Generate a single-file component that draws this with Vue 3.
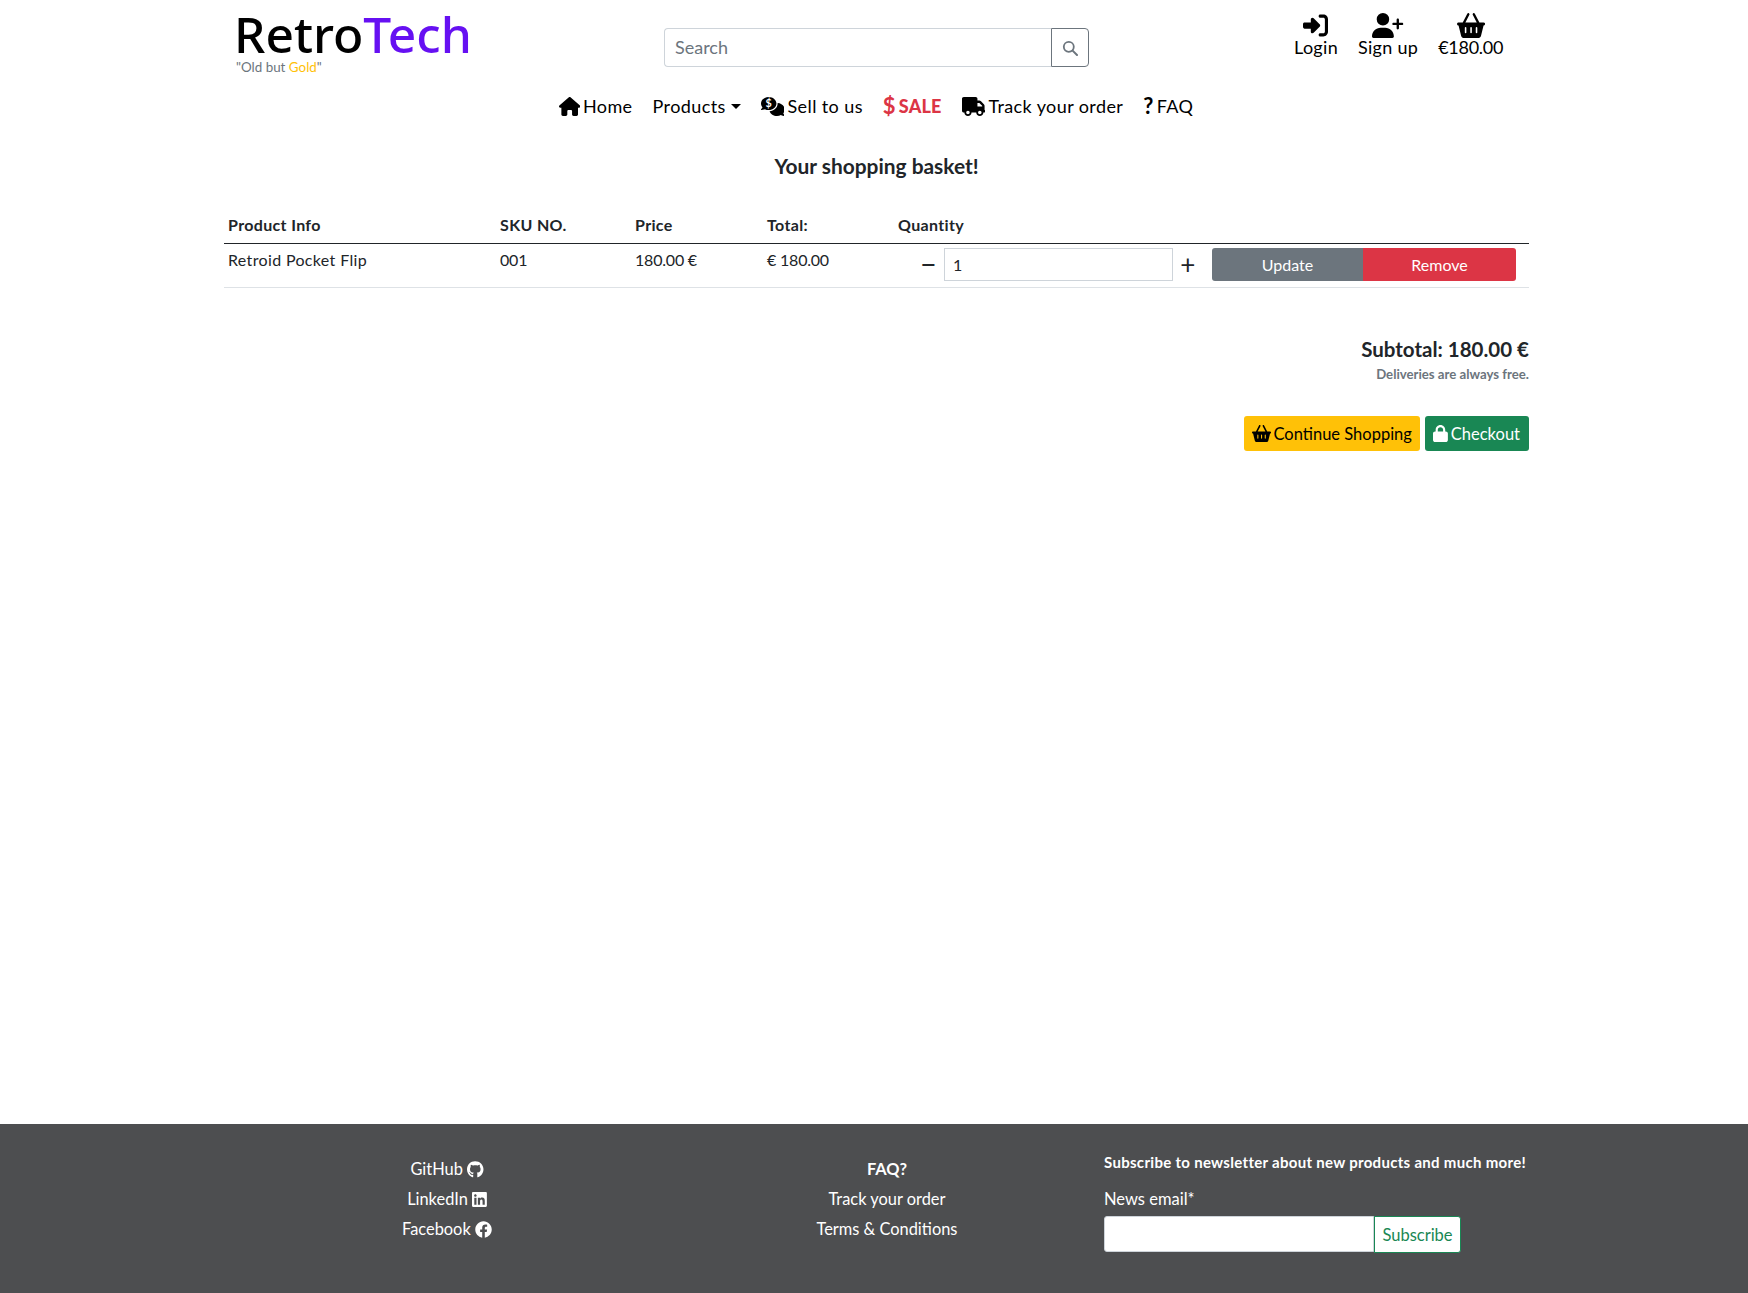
<script setup>
const icons = {
  home: 'M575.8 255.5c0 18-15 32.1-32 32.1h-32l.7 160.2c0 2.7-.2 5.4-.5 8.1V472c0 22.1-17.9 40-40 40H456c-1.1 0-2.2 0-3.3-.1c-1.4 .1-2.8 .1-4.2 .1H416 392c-22.1 0-40-17.9-40-40V448 384c0-17.7-14.3-32-32-32H256c-17.7 0-32 14.3-32 32v64 24c0 22.1-17.9 40-40 40H160 128.1c-1.5 0-3-.1-4.5-.2c-1.2 .1-2.4 .2-3.6 .2H104c-22.1 0-40-17.9-40-40V360c0-.9 0-1.9 .1-2.8V287.6H32c-18 0-32-14-32-32.1c0-9 3-17 10-24L266.4 8c7-7 15-8 22-8s15 2 21 7L564.8 231.5c8 7 12 15 11 24z',
  basket: 'M253.3 35.1c6.1-11.8 1.5-26.3-10.2-32.4s-26.3-1.5-32.4 10.2L117.6 192H32c-17.7 0-32 14.3-32 32s14.3 32 32 32L83.9 463.5C91 492 116.6 512 146 512H430c29.4 0 55-20 62.1-48.5L544 256c17.7 0 32-14.3 32-32s-14.3-32-32-32H458.4L365.3 12.9C359.2 1.2 344.7-3.4 332.9 2.7s-16.3 20.6-10.2 32.4L404.3 192H171.7L253.3 35.1zM192 304v96c0 8.8-7.2 16-16 16s-16-7.2-16-16V304c0-8.8 7.2-16 16-16s16 7.2 16 16zm96-16c8.8 0 16 7.2 16 16v96c0 8.8-7.2 16-16 16s-16-7.2-16-16V304c0-8.8 7.2-16 16-16zm128 16v96c0 8.8-7.2 16-16 16s-16-7.2-16-16V304c0-8.8 7.2-16 16-16s16 7.2 16 16z',
  signIn: 'M217.9 105.9L340.7 228.7c7.2 7.2 11.3 17.1 11.3 27.3s-4.1 20.1-11.3 27.3L217.9 406.1c-6.4 6.4-15 9.9-24 9.9c-18.7 0-33.9-15.2-33.9-33.9l0-62.1L32 320c-17.7 0-32-14.3-32-32l0-64c0-17.7 14.3-32 32-32l128 0 0-62.1c0-18.7 15.2-33.9 33.9-33.9c9 0 17.6 3.6 24 9.9zM352 416l64 0c17.7 0 32-14.3 32-32l0-256c0-17.7-14.3-32-32-32l-64 0c-17.7 0-32-14.3-32-32s14.3-32 32-32l64 0c53 0 96 43 96 96l0 256c0 53-43 96-96 96l-64 0c-17.7 0-32-14.3-32-32s14.3-32 32-32z',
  userPlus: 'M96 128a128 128 0 1 1 256 0A128 128 0 1 1 96 128zM0 482.3C0 383.8 79.8 304 178.3 304h91.4C368.2 304 448 383.8 448 482.3c0 16.4-13.3 29.7-29.7 29.7H29.7C13.3 512 0 498.7 0 482.3zM504 312V248H440c-13.3 0-24-10.7-24-24s10.7-24 24-24h64V136c0-13.3 10.7-24 24-24s24 10.7 24 24v64h64c13.3 0 24 10.7 24 24s-10.7 24-24 24H552v64c0 13.3-10.7 24-24 24s-24-10.7-24-24z',
  truck: 'M48 0C21.5 0 0 21.5 0 48V368c0 26.5 21.5 48 48 48H64c0 53 43 96 96 96s96-43 96-96H384c0 53 43 96 96 96s96-43 96-96h32c17.7 0 32-14.3 32-32s-14.3-32-32-32V288 256 237.3c0-17-6.7-33.3-18.7-45.3L512 114.7c-12-12-28.3-18.7-45.3-18.7H416V48c0-26.5-21.5-48-48-48H48zM416 160h50.7L544 237.3V256H416V160zM112 416a48 48 0 1 1 96 0 48 48 0 1 1 -96 0zm368-48a48 48 0 1 1 0 96 48 48 0 1 1 0-96z',
  comments: 'M416 176c0 97.2-93.1 176-208 176c-38.2 0-73.9-8.7-104.7-23.9c-7.5 4-16 7.9-25.2 11.4C59.8 346.4 37.8 352 16 352c-6.9 0-13.1-4.5-15.2-11.1s.2-13.8 5.8-17.9l0 0 0 0 .2-.2c.2-.2 .6-.4 1.1-.8c1-.8 2.5-2 4.3-3.7c3.6-3.3 8.5-8.1 13.3-14.3c5.5-7 10.7-15.4 14.2-24.7C14.7 250.3 0 214.6 0 176C0 78.8 93.1 0 208 0S416 78.8 416 176zM231.5 383C348.9 372.9 448 288.3 448 176c0-5.2-.2-10.4-.6-15.5C555.1 167.1 640 243.2 640 336c0 38.6-14.7 74.3-39.6 103.4c3.5 9.4 8.7 17.7 14.2 24.7c4.8 6.2 9.7 11 13.3 14.3c1.8 1.6 3.3 2.9 4.3 3.7c.5 .4 .9 .7 1.1 .8l.2 .2 0 0 0 0c5.6 4.1 7.9 11.3 5.8 17.9c-2.1 6.6-8.3 11.1-15.2 11.1c-21.8 0-43.8-5.6-62.1-12.5c-9.2-3.5-17.8-7.4-25.2-11.4C505.9 503.3 470.2 512 432 512c-95.6 0-176.2-54.6-200.5-129z',
  lock: 'M144 144v48H304V144c0-44.2-35.8-80-80-80s-80 35.8-80 80zM80 192V144C80 64.5 144.5 0 224 0s144 64.5 144 144v48h16c35.3 0 64 28.7 64 64V448c0 35.3-28.7 64-64 64H64c-35.3 0-64-28.7-64-64V256c0-35.3 28.7-64 64-64H80z',
  github: 'M165.9 397.4c0 2-2.3 3.6-5.2 3.6-3.3 0-5.6-1.6-5.6-3.6 0-2 2.3-3.6 5.2-3.6 3-.3 5.6 1.3 5.6 3.6zm-31.1-4.5c-.7 2 1.3 4.3 4.3 4.9 2.6 1 5.6 0 6.2-2s-1.3-4.3-4.3-5.2c-2.6-.7-5.5.3-6.2 2.3zm44.2-1.7c-2.9.7-4.9 2.6-4.6 4.9.3 2 2.9 3.3 5.9 2.6 2.9-.7 4.9-2.6 4.6-4.6-.3-1.9-3-3.2-5.9-2.9zM244.8 8C106.1 8 0 113.3 0 252c0 110.9 69.8 205.8 169.5 239.2 12.8 2.3 17.3-5.6 17.3-12.1 0-6.2-.3-40.4-.3-61.4 0 0-70 15-84.7-29.8 0 0-11.4-29.1-27.8-36.6 0 0-22.9-15.7 1.6-15.4 0 0 24.9 2 38.6 25.8 21.9 38.6 58.6 27.5 72.9 20.9 2.3-16 8.8-27.1 16-33.7-55.9-6.2-112.3-14.3-112.3-110.5 0-27.5 7.6-41.3 23.6-58.9-2.6-6.5-11.1-33.3 2.6-67.9 20.9-6.5 69 27 69 27 20-5.6 41.5-8.5 62.8-8.5s42.8 2.9 62.8 8.5c0 0 48.1-33.6 69-27 13.7 34.7 5.2 61.4 2.6 67.9 16 17.7 25.8 31.5 25.8 58.9 0 96.5-58.9 104.2-114.8 110.5 9.2 7.9 17 22.9 17 46.4 0 33.7-.3 75.4-.3 83.6 0 6.5 4.6 14.4 17.3 12.1C428.2 457.8 496 362.9 496 252 496 113.3 383.5 8 244.8 8z',
  linkedin: 'M416 32H31.9C14.3 32 0 46.5 0 64.3v383.4C0 465.5 14.3 480 31.9 480H416c17.6 0 32-14.5 32-32.3V64.3c0-17.8-14.4-32.3-32-32.3zM135.4 416H69V202.2h66.5V416zm-33.2-243c-21.3 0-38.5-17.3-38.5-38.5S80.9 96 102.2 96c21.2 0 38.5 17.3 38.5 38.5 0 21.3-17.2 38.5-38.5 38.5zm282.1 243h-66.4V312c0-24.8-.5-56.7-34.5-56.7-34.6 0-39.9 27-39.9 54.9V416h-66.4V202.2h63.7v29.2h.9c8.9-16.8 30.6-34.5 62.9-34.5 67.2 0 79.7 44.3 79.7 101.9V416z',
  facebook: 'M504 256C504 119 393 8 256 8S8 119 8 256c0 123.78 90.69 226.38 209.25 245V327.69h-63V256h63v-54.64c0-62.15 37-96.48 93.67-96.48 27.14 0 55.52 4.84 55.52 4.84v61h-31.28c-30.8 0-40.41 19.12-40.41 38.73V256h68.78l-11 71.69h-57.78V501C413.31 482.38 504 379.78 504 256z'
}
</script>

<template>
  <div class="page">
    <header class="wrap head">
      <div class="brand">
        <div class="logo">Retro<span class="tech">Tech</span></div>
        <div class="tag">"Old but <span class="gold">Gold</span>"</div>
      </div>
      <form class="search" @submit.prevent>
        <input class="search-input" type="text" placeholder="Search" />
        <button class="search-btn" type="button" aria-label="Search">
          <svg viewBox="0 0 16 16" width="16" height="16"><circle cx="6.8" cy="6.8" r="5" fill="none" stroke="#6c757d" stroke-width="1.8"/><path d="M10.6 10.6L15 15" stroke="#6c757d" stroke-width="2" stroke-linecap="round"/></svg>
        </button>
      </form>
      <div class="account">
        <a class="acc">
          <svg class="acc-i" viewBox="0 0 512 512"><path :d="icons.signIn"/></svg>
          <span>Login</span>
        </a>
        <a class="acc">
          <svg class="acc-i" viewBox="0 0 640 512"><path :d="icons.userPlus"/></svg>
          <span>Sign up</span>
        </a>
        <a class="acc">
          <svg class="acc-i" viewBox="0 0 576 512"><path :d="icons.basket"/></svg>
          <span class="amount">€180.00</span>
        </a>
      </div>
    </header>

    <nav class="nav">
      <a class="nav-link"><svg class="ni" viewBox="0 0 576 512"><path :d="icons.home"/></svg><span>Home</span></a>
      <a class="nav-link">Products<span class="caret"></span></a>
      <a class="nav-link">
        <svg class="ni" viewBox="0 0 640 512">
          <path :d="icons.comments"/>
          <text x="208" y="280" font-size="290" font-weight="700" fill="#fff" text-anchor="middle" font-family="Lato, sans-serif">$</text>
        </svg><span>Sell to us</span></a>
      <a class="nav-link sale"><span class="dollar">$</span><span>SALE</span></a>
      <a class="nav-link"><svg class="ni" viewBox="0 0 640 512"><path :d="icons.truck"/></svg><span>Track your order</span></a>
      <a class="nav-link"><span class="q">?</span><span>FAQ</span></a>
    </nav>

    <main class="wrap main">
      <h1 class="title">Your shopping basket!</h1>
      <table class="basket">
        <colgroup>
          <col class="c1" /><col class="c2" /><col class="c3" /><col class="c4" /><col />
        </colgroup>
        <thead>
          <tr>
            <th>Product Info</th>
            <th>SKU NO.</th>
            <th>Price</th>
            <th>Total:</th>
            <th>Quantity</th>
          </tr>
        </thead>
        <tbody>
          <tr>
            <td>Retroid Pocket Flip</td>
            <td class="num">001</td>
            <td class="num">180.00 €</td>
            <td class="num">€ 180.00</td>
            <td class="qty-cell">
              <div class="qty">
                <span class="step minus">−</span>
                <input class="qty-input" type="text" value="1" />
                <span class="step plus">+</span>
                <button class="btn update" type="button">Update</button>
                <button class="btn remove" type="button">Remove</button>
              </div>
            </td>
          </tr>
        </tbody>
      </table>

      <div class="summary">
        <div class="subtotal">Subtotal: 180.00 €</div>
        <div class="free">Deliveries are always free.</div>
        <div class="actions">
          <button class="btn act cont" type="button"><svg class="bi" viewBox="0 0 576 512"><path :d="icons.basket"/></svg><span>Continue Shopping</span></button>
          <button class="btn act check" type="button"><svg class="bi" viewBox="0 0 448 512"><path :d="icons.lock"/></svg><span>Checkout</span></button>
        </div>
      </div>
    </main>

    <footer class="foot">
      <div class="foot-in">
        <div class="fcol social">
          <a>GitHub <svg class="fi" viewBox="0 0 496 512"><path :d="icons.github"/></svg></a>
          <a>LinkedIn <svg class="fi" viewBox="0 0 448 512"><path :d="icons.linkedin"/></svg></a>
          <a>Facebook <svg class="fi" viewBox="0 0 512 512"><path :d="icons.facebook"/></svg></a>
        </div>
        <div class="fcol links">
          <a class="faq">FAQ?</a>
          <a>Track your order</a>
          <a>Terms &amp; Conditions</a>
        </div>
        <div class="news">
          <div class="news-title">Subscribe to newsletter about new products and much more!</div>
          <label class="news-label">News email*</label>
          <div class="news-row">
            <input class="news-input" type="email" />
            <button class="sub" type="button">Subscribe</button>
          </div>
        </div>
      </div>
    </footer>
  </div>
</template>

<style>
html, body { margin: 0; background: #fff; }
</style>

<style scoped>
.page {
  min-height: 1293px;
  display: flex;
  flex-direction: column;
  font-family: Lato, "Noto Sans", sans-serif;
  font-size: 16px;
  line-height: 24px;
  color: #212529;
}
.wrap { width: 1305px; margin-left: 224px; box-sizing: border-box; }

.head { display: flex; align-items: flex-start; height: 78px; }
.brand { width: 440px; padding: 9px 0 0 10px; box-sizing: border-box; }
.logo { font-family: "Noto Sans", Lato, sans-serif; font-size: 49.7px; line-height: 50px; font-weight: 500; color: #000; }
.tech { color: #6610f2; }
.tag { font-size: 13.4px; line-height: 14px; color: #6c757d; margin-top: 1px; margin-left: 2px; }
.gold { color: #ffc107; }

.search { display: flex; width: 425px; margin-top: 28px; height: 39px; }
.search-input {
  flex: 1; min-width: 0; box-sizing: border-box; height: 39px; padding: 4px 10px 6px;
  border: 1px solid #ced4da; border-right: 0; border-radius: 4px 0 0 4px;
  font: 18px Lato, sans-serif; outline: none;
}
.search-input::placeholder { color: #6c757d; opacity: 1; }
.search-btn {
  width: 38px; height: 39px; box-sizing: border-box; padding: 0;
  display: flex; align-items: center; justify-content: center;
  background: #fff; border: 1px solid #6c757d; border-radius: 0 4px 4px 0;
}

.account { display: flex; gap: 20px; margin-left: 205px; margin-top: 13px; color: #000; font-size: 18px; letter-spacing: 0.3px; }
.acc { display: flex; flex-direction: column; align-items: center; line-height: 22px; }
.acc span { margin-top: -2px; }
.acc .amount { letter-spacing: -0.3px; }
.acc-i { height: 25px; width: auto; display: block; fill: #000; }

.nav {
  display: flex; justify-content: center; gap: 20px; height: 36px; align-items: center;
  font-size: 18px; color: #000; letter-spacing: 0.4px; padding-left: 4px;
  margin-top: 10px;
}
.nav-link { display: flex; align-items: center; gap: 3px; white-space: nowrap; }
.ni { height: 19px; width: auto; fill: #000; display: block; }
.caret {
  display: inline-block; margin-left: 2px; width: 0; height: 0;
  border-top: 5px solid #000; border-left: 5px solid transparent; border-right: 5px solid transparent;
}
.sale { color: #dc3545; font-weight: 900; letter-spacing: 0.2px; }
.dollar { font-size: 22px; font-weight: 700; }
.q { font-size: 22px; font-weight: 700; }

.main { flex: 1; }
.title { margin: 27px 0 0; text-align: center; font-size: 20.9px; line-height: 30px; font-weight: 700; }

.basket { width: 100%; table-layout: fixed; border-collapse: collapse; margin-top: 27px; letter-spacing: 0.35px; }
.c1 { width: 272px; }
.c2 { width: 135px; }
.c3 { width: 132px; }
.c4 { width: 131px; }
th { text-align: left; padding: 5px 4px 6px; font-size: 16px; font-weight: 700; border-bottom: 1px solid #212529; }
td { padding: 4px 4px 0; vertical-align: top; height: 44px; box-sizing: border-box; border-bottom: 1px solid #dee2e6; }
td.num { letter-spacing: -0.2px; }
.qty { display: flex; align-items: center; padding-left: 19px; height: 33px; }
.step { text-align: center; line-height: 33px; color: #212529; }
.minus { width: 23px; margin-right: 4px; font-size: 28px; }
.qty-input {
  width: 229px; height: 33px; box-sizing: border-box; padding: 2px 8px;
  border: 1px solid #ced4da; font: 16px Lato, sans-serif; color: #212529; outline: none;
}
.plus { width: 30px; margin-right: 9px; font-size: 26px; }
.btn { border: 0; font: 16px Lato, sans-serif; cursor: pointer; }
.update, .remove { height: 33px; color: #fff; padding: 0; }
.update { width: 151px; background: #6c757d; border-radius: 3px 0 0 3px; }
.remove { width: 153px; background: #dc3545; border-radius: 0 3px 3px 0; }

.summary { display: flex; flex-direction: column; align-items: flex-end; margin-top: 46px; }
.subtotal { font-size: 20.5px; line-height: 30px; font-weight: 700; }
.free { font-size: 13.2px; line-height: 18px; font-weight: 700; color: #6c757d; margin-top: 1px; }
.actions { display: flex; gap: 5px; margin-top: 33px; }
.act {
  height: 35px; padding: 0 8px; border-radius: 3px; display: flex; align-items: center; gap: 2px;
  font-size: 16.5px; white-space: nowrap;
}
.bi { height: 17px; width: auto; display: block; fill: currentColor; }
.cont { background: #ffc107; color: #000; }
.check { background: #198754; color: #fff; padding: 0 9px 0 8px; gap: 3px; }

.foot { background: #4d4e50; height: 169px; color: #fff; flex: none; }
.foot-in { display: flex; width: 1305px; margin-left: 224px; }
.fcol { display: flex; flex-direction: column; align-items: center; padding-top: 30px; font-size: 16.4px; line-height: 30px; }
.social { width: 446px; }
.links { width: 434px; }
.faq { font-weight: 700; }
.fi { height: 17px; width: auto; fill: #fff; vertical-align: -3px; }
.news { padding-top: 27px; }
.news-title { font-size: 15px; line-height: 22px; font-weight: 700; letter-spacing: 0.3px; }
.news-label { display: block; font-size: 16.5px; line-height: 24px; margin-top: 14px; }
.news-row { display: flex; margin-top: 5px; }
.news-input { width: 270px; height: 36px; box-sizing: border-box; border: 1px solid #ced4da; border-radius: 3px 0 0 3px; background: #fff; outline: none; }
.sub {
  width: 87px; height: 37px; box-sizing: border-box; border: 1px solid #198754; background: #fff; color: #198754;
  border-radius: 0 3px 3px 0; font: 16.5px Lato, sans-serif; padding: 0;
}
</style>
